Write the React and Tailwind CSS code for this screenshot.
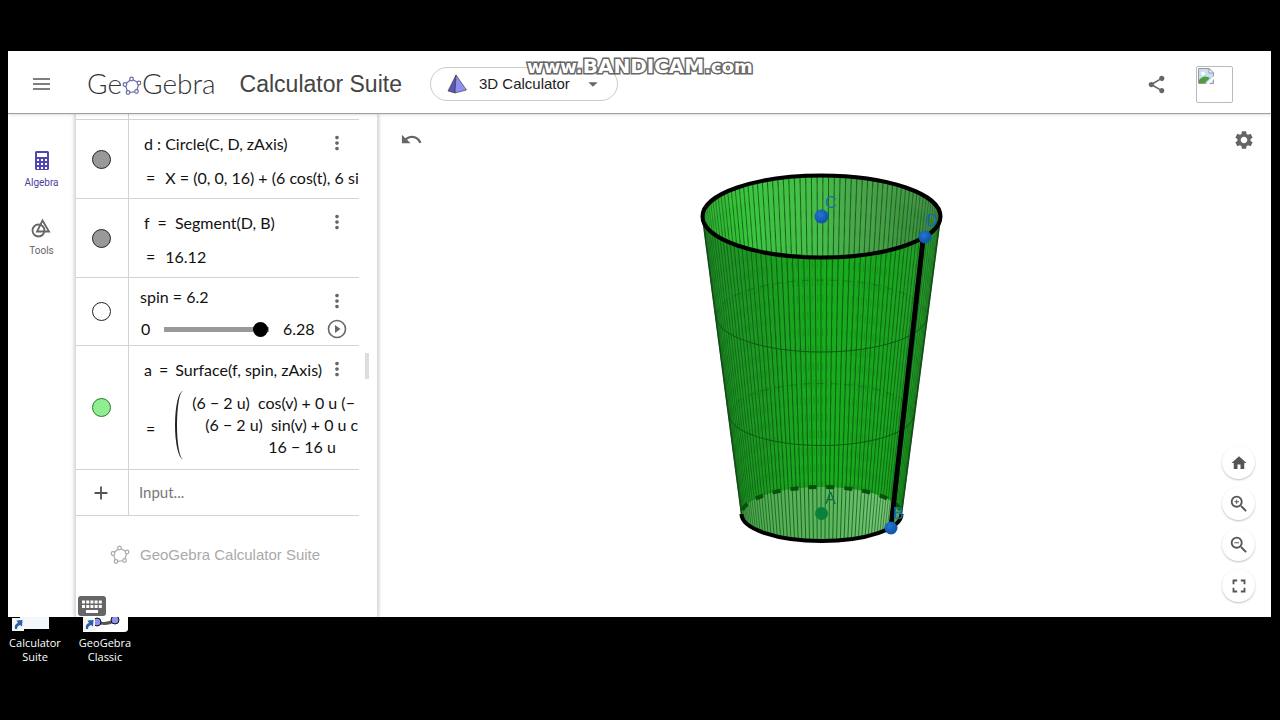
import { useState } from 'react';
import { MdShare, MdSettings, MdHome, MdZoomIn, MdZoomOut, MdFullscreen, MdMoreVert, MdArrowDropDown, MdAdd } from 'react-icons/md';

const CX = 821.5;
const TOP = { y: 216.5, rx: 119, ry: 41 };
const BOTTOM = { y: 514, rx: 80, ry: 27 };
const START = Math.PI / 6;
const SPIN = 6.2;
const STEPS = 128;

// Rulings of the surface, split into the half facing the viewer and the far half
const rulings = Array.from({ length: STEPS + 1 }, (_, i) => {
  const t = START - (SPIN * i) / STEPS;
  const c = Math.cos(t);
  const s = Math.sin(t);
  return {
    x1: CX + TOP.rx * c,
    y1: TOP.y + TOP.ry * s,
    x2: CX + BOTTOM.rx * c,
    y2: BOTTOM.y + BOTTOM.ry * s,
    front: s > 0,
    // lines crowd together at the sides, so they get fainter there
    fade: 0.25 + 0.75 * Math.abs(s),
  };
});
const frontLines = rulings.filter((r) => r.front);
const backLines = rulings.filter((r) => !r.front);

const Cup = () => (
  <svg viewBox="690 165 270 395" className="h-[395px] w-[270px]" role="img" aria-label="Surface">
    <defs>
      <linearGradient id="inside" x1="0" x2="1">
        <stop offset="0" stopColor="#35b538" />
        <stop offset="0.2" stopColor="#42c745" />
        <stop offset="0.5" stopColor="#47bd4a" />
        <stop offset="0.65" stopColor="#4aa84c" />
        <stop offset="1" stopColor="#479449" />
      </linearGradient>
      <linearGradient id="outside" x1="0" x2="1">
        <stop offset="0" stopColor="#22902a" />
        <stop offset="0.25" stopColor="#1c9c22" />
        <stop offset="0.5" stopColor="#18ad1e" />
        <stop offset="0.8" stopColor="#1aa520" />
        <stop offset="1" stopColor="#2f9a34" />
      </linearGradient>
      <linearGradient id="base" x1="0" x2="1">
        <stop offset="0" stopColor="#4eaa50" />
        <stop offset="0.6" stopColor="#5cba5e" />
        <stop offset="1" stopColor="#7ccb7e" />
      </linearGradient>
      <radialGradient id="ball" cx="0.4" cy="0.35">
        <stop offset="0" stopColor="#2476d2" />
        <stop offset="1" stopColor="#1458ad" />
      </radialGradient>
      <clipPath id="mouth">
        <ellipse cx={CX} cy={TOP.y} rx="119" ry="41" />
      </clipPath>
    </defs>

    <path d="M702.5 216.5 L741.5 514 A80 27 0 0 0 901.5 514 L940.5 216.5 A119 41 0 0 0 702.5 216.5" fill="url(#outside)" />
    <ellipse cx={CX} cy={BOTTOM.y} rx="80" ry="27" fill="url(#base)" />
    <ellipse cx={CX} cy={TOP.y} rx="119" ry="41" fill="url(#inside)" />

    {backLines.map((r, i) => (
      <line key={i} x1={r.x1} y1={r.y1} x2={r.x2} y2={r.y2} stroke="#0a5a0e" strokeWidth="1" strokeDasharray="8 9" opacity={0.25 * r.fade} />
    ))}
    <g clipPath="url(#mouth)">
      {backLines.map((r, i) => (
        <line key={i} x1={r.x1} y1={r.y1} x2={r.x2} y2={r.y2} stroke="#123f14" strokeWidth="1" opacity={0.7 * r.fade} />
      ))}
    </g>
    {frontLines.map((r, i) => (
      <line key={i} x1={r.x1} y1={r.y1} x2={r.x2} y2={r.y2} stroke="#093f0c" strokeWidth="1" opacity={0.7 * r.fade} />
    ))}

    <g fill="none" stroke="#0c4a0f" strokeWidth="1">
      <path d="M716 316 A105.5 36 0 0 0 927 316" opacity="0.8" />
      <path d="M729 414.5 A92.5 31 0 0 0 914 414.5" opacity="0.8" />
      <path d="M716 316 A105.5 36 0 0 1 927 316" strokeDasharray="8 6" opacity="0.35" />
      <path d="M729 414.5 A92.5 31 0 0 1 914 414.5" strokeDasharray="8 6" opacity="0.35" />
    </g>
    <path d="M702.5 216.5 L741.5 514 M940.5 216.5 L901.5 514" stroke="#164a18" strokeWidth="1.5" />

    <path d="M741.5 514 A80 27 0 0 1 901.5 514" fill="none" stroke="#07520b" strokeWidth="4" strokeDasharray="8 10" strokeDashoffset="-4" />
    <path d="M741.5 514 A80 27 0 0 0 901.5 514" fill="none" stroke="#000" strokeWidth="4" />
    <ellipse cx={CX} cy={TOP.y} rx="119" ry="41" fill="none" stroke="#000" strokeWidth="4" />
    <line x1="923" y1="240" x2="891" y2="527" stroke="#000" strokeWidth="5" />

    <circle cx="821.5" cy="513.5" r="6.5" fill="#09803c" />
    <circle cx="821.5" cy="216.5" r="7" fill="url(#ball)" />
    <circle cx="925" cy="237" r="6.5" fill="url(#ball)" />
    <circle cx="891" cy="528" r="6.5" fill="url(#ball)" />
    <g className="font-['Liberation_Sans',sans-serif] text-[16px]">
      <text x="825" y="208" fill="#1673a5">C</text>
      <text x="926" y="226" fill="#1565c0">D</text>
      <text x="825" y="504" fill="#0b7040">A</text>
      <text x="893" y="519" fill="#1673a5">B</text>
    </g>
  </svg>
);

const Pentagon = ({ className }) => (
  <svg viewBox="0 0 20 20" className={className} fill="none" stroke="currentColor" strokeWidth="1.2" aria-hidden="true">
    <path d="M9.500 3 L17 7 L14.500 15.500 L6 16.500 L3 8.500 Z" />
    <g fill="#fff">
      <circle cx="9.500" cy="3" r="1.800" />
      <circle cx="17" cy="7" r="1.800" />
      <circle cx="14.500" cy="15.500" r="1.800" />
      <circle cx="6" cy="16.500" r="1.800" />
      <circle cx="3" cy="8.500" r="1.800" />
    </g>
  </svg>
);

const Header = () => (
  <header className="relative z-20 flex h-[63px] shrink-0 items-center border-b border-[#a0a0a0] bg-white pt-1 pr-[38px] pl-[22px] shadow-sm">
    <button aria-label="Menu" className="text-[#555]">
      <svg viewBox="0 0 23 24" className="h-6 w-[23px]" stroke="currentColor" strokeWidth="1.6" aria-hidden="true">
        <path d="M3 7 H20 M3 12 H20 M3 17 H20" />
      </svg>
    </button>
    <div className="ml-[34px] flex items-center pb-[2px] font-['Lato',sans-serif] text-[28px] leading-8 font-light text-[#333]">
      <span>Ge</span>
      <Pentagon className="mt-[5px] size-5 text-[#6a6aa8]" />
      <span>Gebra</span>
    </div>
    <h1 className="ml-6 text-[23px] text-[#444]">Calculator Suite</h1>
    <button className="ml-7 flex h-[34px] w-[188px] items-center rounded-full border border-[#ccc] pl-4 text-[15px] text-[#222]">
      <svg viewBox="0 0 20 20" className="size-5" aria-hidden="true">
        <path d="M9 1 L1 17 L8 19 Z" fill="#5757b5" stroke="#333" strokeWidth="0.600" />
        <path d="M9 1 L8 19 L19.500 16 Z" fill="#8e8ef5" stroke="#333" strokeWidth="0.600" />
      </svg>
      <span className="ml-3">3D Calculator</span>
      <MdArrowDropDown size={22} className="ml-3 text-[#666]" />
    </button>
    <button aria-label="Share" className="ml-auto text-[#666]">
      <MdShare size={21} />
    </button>
    <button aria-label="Profile" className="ml-[29px] flex size-[37px] items-start rounded-[2px] border border-[#bbb] p-px">
      <svg viewBox="0 0 16 16" className="size-4" aria-hidden="true">
        <path d="M0.500 0.500 H11 L15.500 5 V15.500 H0.500 Z" fill="#c9dcf5" stroke="#999" />
        <path d="M11 0.500 V5 H15.500 Z" fill="#fff" stroke="#999" />
        <circle cx="5" cy="5.500" r="2" fill="#fff" />
        <path d="M1 15 V12 Q6 6 12 10 L7 15 Z" fill="#4e9e3c" />
        <path d="M8 16 L16 8 V11 L11 16 Z" fill="#fff" />
      </svg>
    </button>
  </header>
);

const SideNav = () => (
  <nav className="flex w-[67px] shrink-0 flex-col items-center pt-[36px] font-['Roboto',sans-serif] text-[10px] leading-3">
    <button className="flex flex-col items-center gap-[7px] text-[#4b42a0]">
      <svg viewBox="0 0 14 20" className="h-5 w-[14px]" aria-hidden="true">
        <rect y="1" width="14" height="19" rx="1.500" fill="#5145b0" />
        <g fill="#fff">
          <rect x="2" y="3" width="10" height="4" />
          {[9, 13, 17].map((y) => [2, 6, 10].map((x) => <rect key={`${x}-${y}`} x={x} y={y} width="2" height="2" />))}
        </g>
      </svg>
      Algebra
    </button>
    <button className="mt-[29px] flex flex-col items-center gap-[7px] text-[#666]">
      <svg viewBox="0 0 20 20" className="size-5" fill="none" stroke="#666" strokeWidth="1.800" aria-hidden="true">
        <circle cx="7.500" cy="12.500" r="6" />
        <path d="M11.500 2.500 L18 13.500 H6 Z" />
      </svg>
      Tools
    </button>
  </nav>
);

const marbleColors = {
  gray: 'border-[#222] bg-[#999]',
  empty: 'border-[#222] bg-white',
  green: 'border-[#2c7a2c] bg-[#90ee90]',
};

const Row = ({ marble, label, height, children }) => (
  <li className={`flex border-b border-[#d3d3d3] ${height}`}>
    <div className="flex w-[53px] shrink-0 items-center justify-center border-r border-[#d3d3d3] pr-[2px]">
      <button aria-label={`Show or hide ${label}`} className={`size-[19px] rounded-full border-[1.5px] ${marbleColors[marble]}`} />
    </div>
    <div className="relative min-w-0 flex-1 overflow-hidden whitespace-nowrap">
      {children}
      <button aria-label={`More options for ${label}`} className="absolute top-3 right-[11px] text-[#666]">
        <MdMoreVert size={22} />
      </button>
    </div>
  </li>
);

const AlgebraPanel = () => {
  const [spin, setSpin] = useState(6.2);

  return (
    <section className="relative z-10 flex w-[303px] shrink-0 flex-col border-x border-[#ddd] shadow-[0_0_4px_rgba(0,0,0,0.3)]">
      <ul className="mr-[18px] font-['Lato',sans-serif] text-[16px] leading-5 text-[#111]">
        <li className="flex h-[6px] border-b border-[#d3d3d3]">
          <div className="w-[53px] border-r border-[#d3d3d3]" />
        </li>
        <Row marble="gray" label="d" height="h-[79px]">
          <p className="pt-[14px] pl-[15px]">d : Circle(C, D, zAxis)</p>
          <p className="flex gap-[10px] pt-[14px] pl-[17px]"><span>=</span><span>X = (0, 0, 16) + (6 cos(t), 6 si</span></p>
        </Row>
        <Row marble="gray" label="f" height="h-[79px]">
          <p className="flex gap-[8px] pt-[14px] pl-[15px]"><span>f</span><span>=</span><span>Segment(D, B)</span></p>
          <p className="flex gap-[10px] pt-[14px] pl-[17px]"><span>=</span><span>16.12</span></p>
        </Row>
        <Row marble="empty" label="spin" height="h-[68px]">
          <label htmlFor="spin" className="block pt-[9px] pl-[11px]">spin = {spin}</label>
          <div className="flex items-center pt-3 pl-3">
            <span className="w-[23px]">0</span>
            <input
              id="spin"
              type="range"
              min="0"
              max="6.28"
              step="0.01"
              value={spin}
              onChange={(e) => setSpin(Number(e.target.value))}
              className="h-[14px] w-[105px] appearance-none bg-transparent [&::-webkit-slider-runnable-track]:h-[5px] [&::-webkit-slider-runnable-track]:bg-[#999] [&::-webkit-slider-thumb]:-mt-[5px] [&::-webkit-slider-thumb]:size-[15px] [&::-webkit-slider-thumb]:appearance-none [&::-webkit-slider-thumb]:rounded-full [&::-webkit-slider-thumb]:bg-black"
            />
            <span className="ml-[14px]">6.28</span>
            <button aria-label="Play" className="mr-3 ml-auto">
              <svg viewBox="0 0 20 20" className="size-5" aria-hidden="true">
                <circle cx="10" cy="10" r="8.500" fill="none" stroke="#666" strokeWidth="1.600" />
                <path d="M8 6 L13.500 10 L8 14 Z" fill="#666" />
              </svg>
            </button>
          </div>
        </Row>
        <Row marble="green" label="a" height="h-[124px]">
          <p className="flex gap-[7px] pt-[14px] pl-[15px]"><span>a</span><span>=</span><span>Surface(f, spin, zAxis)</span></p>
          <div className="flex items-center pt-[11px] pl-[17px]">
            <span className="pt-2">=</span>
            <span className="ml-5 h-[68px] w-4 shrink-0 rounded-l-[100%] border-l-2 border-[#222]" />
            <div className="ml-px flex shrink-0 flex-col leading-[22px]">
              <span>(6 − 2 u)&nbsp; cos(v) + 0 u (−</span>
              <span className="pl-[13px]">(6 − 2 u)&nbsp; sin(v) + 0 u c</span>
              <span className="pl-[76px]">16 − 16 u</span>
            </div>
          </div>
        </Row>
        <li className="flex h-[46px] border-b border-[#d3d3d3]">
          <div className="flex w-[53px] shrink-0 items-center justify-center border-r border-[#d3d3d3] pr-[2px] text-[#555]">
            <MdAdd size={22} />
          </div>
          <input aria-label="Input" placeholder="Input..." className="min-w-0 flex-1 pb-[2px] pl-[10px] text-[15px] outline-none placeholder:text-[#777]" />
        </li>
      </ul>
      <div className="absolute top-[239px] right-2 h-[26px] w-1 bg-[#ddd]" />
      <p className="mt-7 flex items-center pl-[34px] text-[15px] text-[#aaa]">
        <Pentagon className="mr-[10px] size-5" />
        GeoGebra Calculator Suite
      </p>
      <button aria-label="Keyboard" className="mt-auto mb-px ml-[2px] flex h-5 w-7 items-center justify-center rounded-[3px] bg-[#666]">
        <svg viewBox="0 0 28 20" className="h-5 w-7" fill="#fff" aria-hidden="true">
          {[4.5, 9].map((y) => [4, 8.2, 12.4, 16.6, 20.8].map((x) => <rect key={`${x}-${y}`} x={x} y={y} width="3" height="3" />))}
          <rect x="8" y="14" width="12" height="3" />
        </svg>
      </button>
    </section>
  );
};

const zoomButtons = [
  { label: 'Standard view', Icon: MdHome, size: 18 },
  { label: 'Zoom in', Icon: MdZoomIn, size: 22 },
  { label: 'Zoom out', Icon: MdZoomOut, size: 22 },
  { label: 'Fullscreen', Icon: MdFullscreen, size: 22 },
];

const GraphicsView = () => (
  <main className="relative flex min-w-0 flex-1 flex-col items-center">
    <div className="flex h-[51px] w-full items-center justify-between pr-[16px] pl-[22px] text-[#666]">
      <button aria-label="Undo">
        <svg viewBox="0 0 24 24" className="size-[23px]" fill="currentColor" aria-hidden="true">
          <path d="M12.5 8c-2.65 0-5.05.99-6.9 2.6L2 7v9h9l-3.62-3.62c1.39-1.16 3.16-1.88 5.12-1.88 3.54 0 6.55 2.31 7.6 5.5l2.37-.78C21.08 11.03 17.15 8 12.5 8z" />
        </svg>
      </button>
      <button aria-label="Settings"><MdSettings size={22} /></button>
    </div>
    <Cup />
    <div className="absolute right-[16px] bottom-[15px] flex flex-col gap-2">
      {zoomButtons.map(({ label, Icon, size }) => (
        <button key={label} aria-label={label} className="flex size-[33px] items-center justify-center rounded-full bg-white text-[#555] shadow-[0_1px_2px_rgba(0,0,0,0.25)]">
          <Icon size={size} />
        </button>
      ))}
    </div>
  </main>
);

const ShortcutArrow = () => (
  <>
    <rect x="0" y="1" width="12" height="13" fill="#f4f4f4" />
    <path d="M3 12 Q2 7 6 6 L4.500 3.500 L10.500 3 L10 9.500 L8 8 Q5 9 5 12 Z" fill="#2b5fa8" />
  </>
);

const Desktop = () => (
  <div className="flex h-[103px] shrink-0 font-['Open_Sans',sans-serif] text-[11px] leading-[14px] text-white">
    <a href="#calculator" className="flex w-[54px] flex-col items-center text-center">
      <svg viewBox="0 0 46 15" className="mb-1 h-[15px] w-[46px]" aria-hidden="true">
        <rect x="8" width="29" height="12" fill="#f4f7f9" />
        <ShortcutArrow />
      </svg>
      Calculator Suite
    </a>
    <a href="#classic" className="ml-[14px] flex w-[58px] flex-col items-center text-center">
      <svg viewBox="0 0 45 15" className="mb-1 h-[15px] w-[45px]" aria-hidden="true">
        <path d="M0 0 H45 V12 Q45 15 41 15 H0 Z" fill="#fff" />
        <path d="M14 5 Q23 9 32 3" fill="none" stroke="#555" strokeWidth="3" />
        <circle cx="14" cy="5" r="4" fill="#8f8ff0" stroke="#111" />
        <circle cx="32" cy="3" r="4" fill="#8f8ff0" stroke="#111" />
        <ShortcutArrow />
      </svg>
      GeoGebra Classic
    </a>
  </div>
);

export default function App() {
  return (
    <div className="relative flex min-h-screen flex-col bg-black pt-[51px] pr-[9px] pl-2 font-['Liberation_Sans',Arial,sans-serif]">
      <div className="flex flex-1 flex-col overflow-hidden bg-white">
        <Header />
        <div className="flex flex-1">
          <SideNav />
          <AlgebraPanel />
          <GraphicsView />
        </div>
      </div>
      <Desktop />
      <div className="pointer-events-none absolute inset-x-0 top-[54px] z-30 text-center font-['DejaVu_Sans',sans-serif] text-[20px] leading-6 font-bold text-white [paint-order:stroke_fill] [-webkit-text-stroke:3px_#666]">
        <span className="text-[18px]">www.</span>BANDICAM<span className="text-[18px]">.com</span>
      </div>
    </div>
  );
}
